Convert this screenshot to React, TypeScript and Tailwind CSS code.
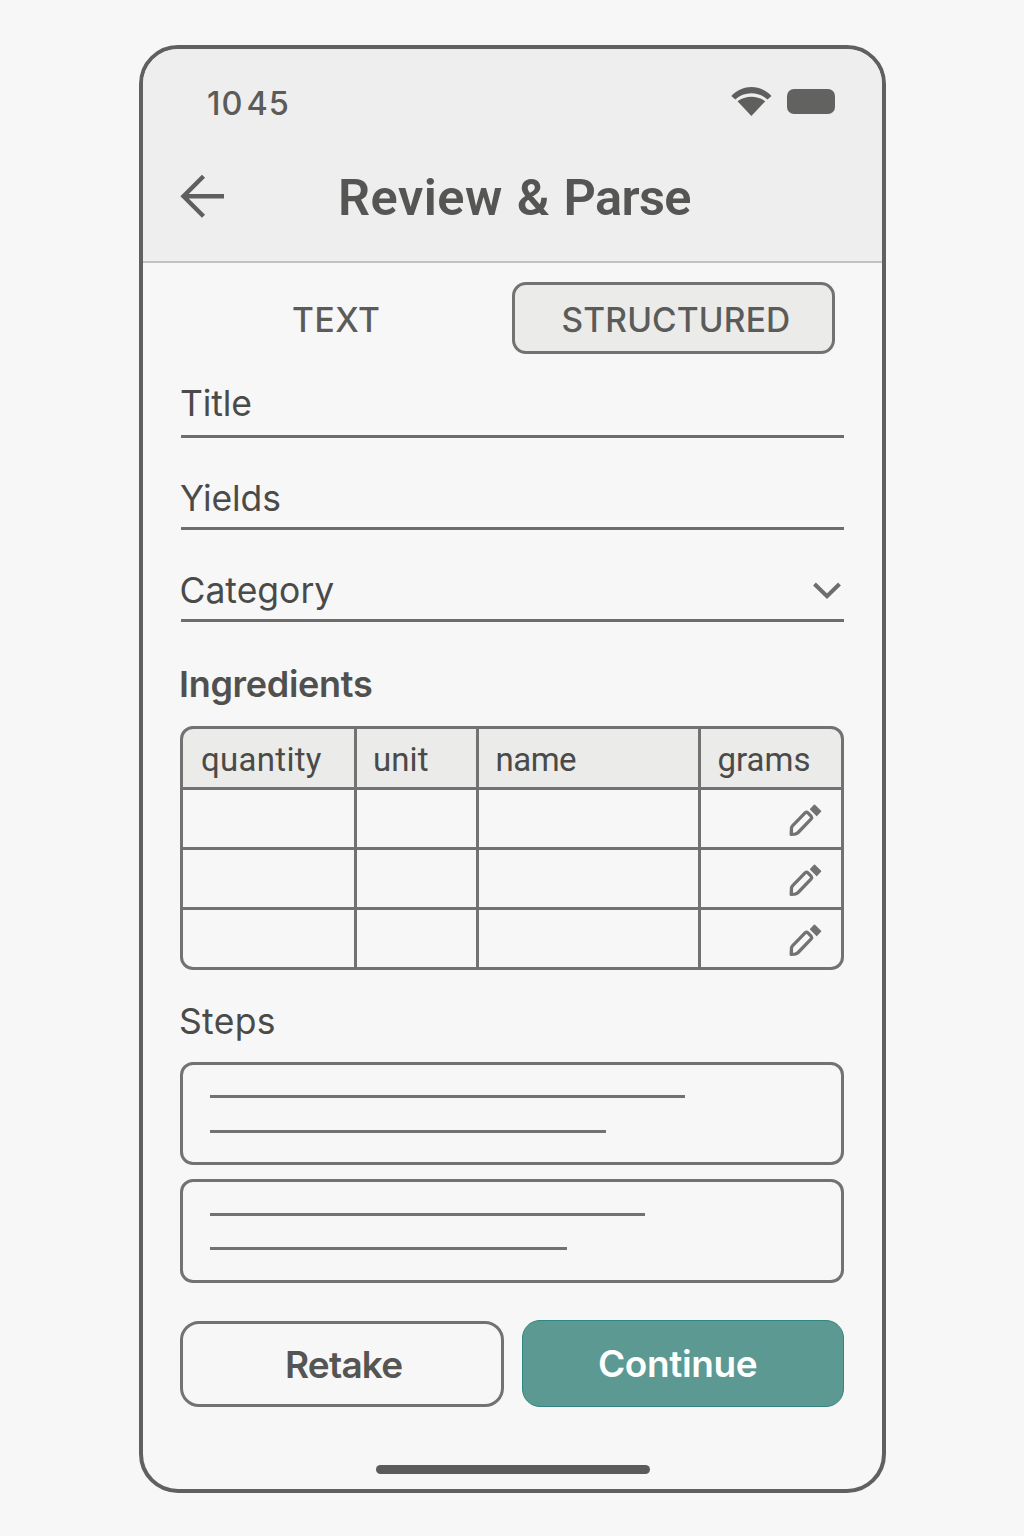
import React from "react";

const ROBOTO = "font-['Roboto','Liberation_Sans',sans-serif]";

function WifiIcon() {
  return (
    <svg width="42" height="30" viewBox="0 0 42 30" fill="#5f5f5e" className="block">
      <path d="M0.300 9 C12 -2.900 28.800 -2.900 40.500 9 L36.500 12.500 C27.800 4.200 13 4.200 4.300 12.500 Z" />
      <path d="M6.500 14.200 C14.500 8.200 26.300 8.200 34.300 14.200 L20.400 28.900 Z" />
    </svg>
  );
}

function BackIcon() {
  return (
    <svg width="46" height="44" viewBox="0 0 46 44" fill="none" stroke="#5f5f5e" strokeWidth="4.400" className="block">
      <path d="M23.500 2.300 L3.500 22.300 L23.500 42.300 M4 22.300 H44" />
    </svg>
  );
}

function ChevronIcon() {
  return (
    <svg width="28" height="18" viewBox="0 0 28 18" fill="none" stroke="#6c6d6c" strokeWidth="4" className="block">
      <path d="M1.500 2 L14 14.200 L26.500 2" />
    </svg>
  );
}

function PencilIcon() {
  return (
    <svg width="34" height="35" viewBox="0 0 34 35" className="block">
      <path
        d="M3.200 32.300 L3.500 25.800 Q3.700 24.700 4.700 23.700 L17.300 10.700 Q18.600 9.700 19.700 10.700 L23.300 14.400 Q24.200 15.600 23.200 16.800 L10.600 30 Q8.800 31.900 6.800 32.100 Z"
        fill="none"
        stroke="#717271"
        strokeWidth="3.300"
        strokeLinejoin="round"
      />
      <path
        d="M26.500 3.300 L32.500 9.300 L28.700 13.300 L22.700 7.300 Z"
        fill="#717271"
        stroke="#717271"
        strokeWidth="1.600"
        strokeLinejoin="round"
      />
    </svg>
  );
}

const columns = [
  { label: "quantity", tracking: "tracking-[0.3px]" },
  { label: "unit", tracking: "-ml-[2px] tracking-[0.1px]" },
  { label: "name", tracking: "-ml-[1.500px] tracking-[-0.5px]" },
  { label: "grams", tracking: "-ml-[1.500px] tracking-[0px]" },
];

function Cells({ children }: { children: React.ReactNode }) {
  return <div className="grid h-full grid-cols-[171px_119px_219px_1fr] gap-x-[3px]">{children}</div>;
}

function IngredientsTable() {
  return (
    <div className="grid h-[244px] grid-rows-[58px_57px_57px_57px] gap-y-[3px] overflow-hidden rounded-[13px] border-[3px] border-[#717271] bg-[#717271]">
      <Cells>
        {columns.map((c) => (
          <div key={c.label} className="flex items-center bg-[#ebebea] pt-[4px] pl-[18px] text-[33px] leading-[40px] text-[#4a4a49]">
            <span className={c.tracking}>{c.label}</span>
          </div>
        ))}
      </Cells>
      {[0, 1, 2].map((row) => (
        <Cells key={row}>
          <div className="bg-[#f7f7f7]" />
          <div className="bg-[#f7f7f7]" />
          <div className="bg-[#f7f7f7]" />
          <div className="flex items-start justify-end bg-[#f7f7f7] pt-[12px] pr-[19px]">
            <PencilIcon />
          </div>
        </Cells>
      ))}
    </div>
  );
}

export default function App() {
  return (
    <div className={`flex h-[1536px] w-[1024px] justify-start bg-[#f7f7f7] pt-[45px] pl-[139px] text-[#4a4a49] ${ROBOTO}`}>
      <div className="flex h-[1448px] w-[747px] flex-col overflow-hidden rounded-[39px] border-4 border-[#60605f] bg-[#f7f7f7]">
        <header className="h-[214px] shrink-0 border-b-2 border-[#c2c2c1] bg-[#efeeee]">
          <div className="flex items-start justify-between pt-[34px] pr-[47px] pl-[64px]">
            <span className="font-['Inter'] text-[32.500px] leading-[42px] font-medium text-[#5b5b59]">
              <span className="tracking-[1px]">1</span>
              <span className="tracking-[4px]">0</span>
              <span className="tracking-[1px]">45</span>
            </span>
            <div className="flex items-start gap-[14px] pt-[4px]">
              <WifiIcon />
              <div className="mt-[2px] h-[25px] w-[48px] rounded-[7px] bg-[#626261]" />
            </div>
          </div>
          <div className="mt-[41px] flex h-[60px] items-center pl-[37px]">
            <BackIcon />
            <h1 className="mt-[4px] ml-[112px] flex gap-[14px] text-[50.5px] leading-[60px] font-semibold whitespace-nowrap text-[#555554]">
              <span className="tracking-[0.5px]">Review</span>
              <span className="tracking-[0px]">&amp;</span>
              <span className="tracking-[-0.7px]">Parse</span>
            </h1>
          </div>
        </header>

        <main className="flex flex-col pr-[38px] pl-[37px] font-['Inter','Roboto',sans-serif]">
          <div className="mt-[19px] flex h-[72px] pr-[9px]">
            <button className="flex w-[332px] items-center pt-[4px] pl-[112px] text-[33.500px] leading-[40px] font-medium tracking-[0.6px] text-[#5b5b59]">
              TEXT
            </button>
            <button className="flex w-[323px] items-center rounded-[14px] border-[3px] border-[#717271] bg-[#ebebea] pt-[4px] pl-[46.500px] text-[33.500px] leading-[40px] font-medium tracking-[0.15px] text-[#5b5b59]">
              STRUCTURED
            </button>
          </div>

          <label className="flex h-[84px] items-end pb-[11px] text-[35.500px] leading-[40px] tracking-[-0.1px] ml-px border-b-[3px] border-[#6c6d6c]">
            <span className="-ml-px">Title</span>
          </label>
          <label className="ml-px flex h-[92px] items-end border-b-[3px] border-[#6c6d6c] pb-[8px] text-[35.500px] leading-[40px] tracking-[-0.1px]">
            <span className="-ml-px">Yields</span>
          </label>
          <div className="ml-px flex h-[92px] items-end justify-between border-b-[3px] border-[#6c6d6c] pr-[3px] pb-[8px] text-[35.500px] leading-[40px]">
            <span className="-ml-[1.500px] tracking-[0px]">Category</span>
            <span className="pb-[11px]">
              <ChevronIcon />
            </span>
          </div>

          <h2 className="-ml-px flex h-[104px] items-end pb-[22px] text-[36px] leading-[40px] font-semibold tracking-[-0.3px] text-[#50504f]">Ingredients</h2>
          <div className={ROBOTO}>
            <IngredientsTable />
          </div>

          <h2 className="-ml-px flex h-[92px] items-end pb-[20px] text-[35.500px] leading-[40px] tracking-[0.3px]">Steps</h2>
          <div className="flex flex-col gap-[14px]">
            <div className="h-[103px] rounded-[13px] border-[3px] border-[#717271] pt-[30px] pl-[27px]">
              <div className="h-[3px] w-[475px] bg-[#717271]" />
              <div className="mt-[32px] h-[3px] w-[396px] bg-[#717271]" />
            </div>
            <div className="h-[104px] rounded-[13px] border-[3px] border-[#717271] pt-[31px] pl-[27px]">
              <div className="h-[3px] w-[435px] bg-[#717271]" />
              <div className="mt-[31px] h-[3px] w-[357px] bg-[#717271]" />
            </div>
          </div>

          <div className="mt-[37px] flex items-end gap-[18px]">
            <button className="flex h-[86px] w-[324px] items-center rounded-[19px] border-[3px] border-[#717271] pt-[1px] pl-[102px] text-[37px] leading-[44px] font-semibold tracking-[-0.8px] text-[#555554]">
              Retake
            </button>
            <button className="flex h-[87px] w-[322px] items-center rounded-[18px] border border-[#31877f] bg-[#5c9993] pt-[1px] pl-[75px] text-[37px] leading-[44px] font-semibold tracking-[-0.4px] text-white">
              Continue
            </button>
          </div>
          <div className="mt-[58px] ml-[196px] h-[9px] w-[274px] rounded-full bg-[#5b5b59]" />
        </main>
      </div>
    </div>
  );
}
